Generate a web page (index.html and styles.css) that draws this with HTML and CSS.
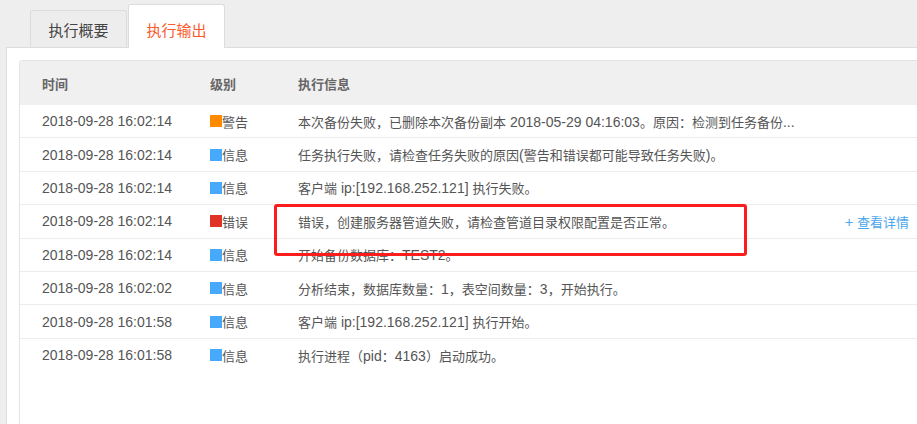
FILE: index.html
```html
<!DOCTYPE html>
<html lang="zh-CN">
<head>
<meta charset="utf-8">
<title>执行输出</title>
<link rel="stylesheet" href="styles.css">
</head>
<body>
<div class="tabs">
  <div class="tab">执行概要</div>
  <div class="tab active">执行输出</div>
</div>
<div class="panel">
  <div class="card">
    <div class="row head">
      <div class="c-time">时间</div>
      <div class="c-level">级别</div>
      <div class="c-msg">执行信息</div>
      <div class="c-act"></div>
    </div>
    <div class="row">
      <div class="c-time lt">2018-09-28 16:02:14</div>
      <div class="c-level"><span class="sq warn"></span>警告</div>
      <div class="c-msg">本次备份失败，已删除本次备份副本<span class="lt"> 2018-05-29 04:16:03</span>。原因：检测到任务备份<span class="lt">...</span></div>
      <div class="c-act"></div>
    </div>
    <div class="row">
      <div class="c-time lt">2018-09-28 16:02:14</div>
      <div class="c-level"><span class="sq info"></span>信息</div>
      <div class="c-msg">任务执行失败，请检查任务失败的原因<span class="lt">(</span>警告和错误都可能导致任务失败<span class="lt">)</span>。</div>
      <div class="c-act"></div>
    </div>
    <div class="row">
      <div class="c-time lt">2018-09-28 16:02:14</div>
      <div class="c-level"><span class="sq info"></span>信息</div>
      <div class="c-msg">客户端<span class="lt"> ip:[192.168.252.121] </span>执行失败。</div>
      <div class="c-act"></div>
    </div>
    <div class="row">
      <div class="c-time lt">2018-09-28 16:02:14</div>
      <div class="c-level"><span class="sq err"></span>错误</div>
      <div class="c-msg">错误，创建服务器管道失败，请检查管道目录权限配置是否正常。</div>
      <div class="c-act"><a class="more"><span class="lt">+ </span>查看详情</a></div>
    </div>
    <div class="row">
      <div class="c-time lt">2018-09-28 16:02:14</div>
      <div class="c-level"><span class="sq info"></span>信息</div>
      <div class="c-msg">开始备份数据库：<span class="lt">TEST2</span>。</div>
      <div class="c-act"></div>
    </div>
    <div class="row">
      <div class="c-time lt">2018-09-28 16:02:02</div>
      <div class="c-level"><span class="sq info"></span>信息</div>
      <div class="c-msg">分析结束，数据库数量：<span class="lt">1</span>，表空间数量：<span class="lt">3</span>，开始执行。</div>
      <div class="c-act"></div>
    </div>
    <div class="row">
      <div class="c-time lt">2018-09-28 16:01:58</div>
      <div class="c-level"><span class="sq info"></span>信息</div>
      <div class="c-msg">客户端<span class="lt"> ip:[192.168.252.121] </span>执行开始。</div>
      <div class="c-act"></div>
    </div>
    <div class="row last">
      <div class="c-time lt">2018-09-28 16:01:58</div>
      <div class="c-level"><span class="sq info"></span>信息</div>
      <div class="c-msg">执行进程（<span class="lt">pid</span>：<span class="lt">4163</span>）启动成功。</div>
      <div class="c-act"></div>
    </div>
  </div>
</div>
<div class="annot"></div>
</body>
</html>
```

FILE: styles.css
```css
html, body {
  margin: 0;
  padding: 0;
}
body {
  width: 917px;
  height: 424px;
  overflow: hidden;
  background: #efeeef;
  font-family: "Liberation Sans", "Noto Sans CJK SC", sans-serif;
  font-size: 13px;
  color: #555;
}
.lt {
  font-family: "Liberation Sans", sans-serif;
  font-size: 14px;
}
.tabs {
  display: flex;
  align-items: flex-end;
  height: 48px;
  padding-left: 30px;
  box-sizing: border-box;
}
.tab {
  width: 97px;
  height: 38px;
  box-sizing: border-box;
  display: flex;
  align-items: center;
  justify-content: center;
  background: #eeeded;
  border: 1px solid #dcdcdc;
  border-bottom: none;
  border-radius: 3px 3px 0 0;
  font-size: 15px;
  color: #444;
}
.tab.active {
  position: relative;
  z-index: 2;
  margin-left: 1px;
  height: 44px;
  padding-top: 6px;
  background: #fff;
  color: #fa5a2c;
}
.panel {
  position: relative;
  z-index: 1;
  margin-top: -1px;
  margin-left: 6px;
  width: 940px;
  height: 400px;
  background: #fff;
  border-top: 1px solid #dcdcdc;
  border-left: 1px solid #dcdcdc;
  padding: 12px 0 0 12px;
  box-sizing: border-box;
}
.card {
  width: 906px;
  height: 420px;
  border: 1px solid #e4e4e4;
  border-radius: 3px;
  box-sizing: border-box;
  overflow: hidden;
}
.row {
  display: grid;
  grid-template-columns: 168px 88px 1fr auto;
  align-items: center;
  height: 33.4px;
  padding: 0 15px 0 22px;
  border-bottom: 1px solid #ececec;
  box-sizing: border-box;
  white-space: nowrap;
}
.row.last {
  border-bottom: none;
}
.row.head {
  height: 44px;
  background: #f1f0f1;
  border-bottom: none;
  color: #666;
  font-weight: bold;
}
.c-level {
  display: flex;
  align-items: center;
}
.sq {
  display: inline-block;
  width: 12px;
  height: 12px;
}
.sq.warn { background: #ff8a00; }
.sq.info { background: #46a9fb; }
.sq.err { background: #df3327; }
.more {
  color: #4aa6ee;
  text-decoration: none;
}
.annot {
  position: absolute;
  left: 274px;
  top: 204px;
  width: 473px;
  height: 52px;
  box-sizing: border-box;
  border: 3px solid #fb1c1c;
  border-radius: 3px;
  z-index: 5;
}
```
